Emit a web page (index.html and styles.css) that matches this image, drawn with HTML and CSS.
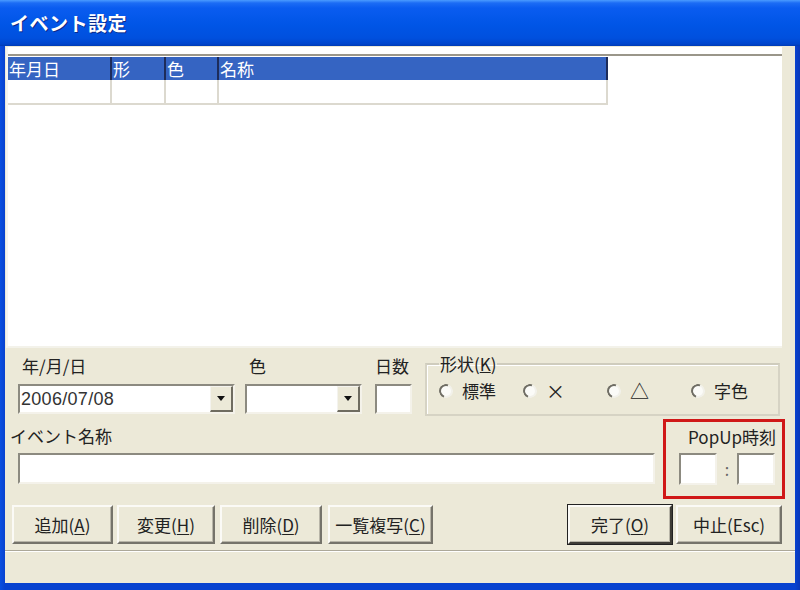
FILE: index.html
```html
<!DOCTYPE html>
<html lang="ja">
<head>
<meta charset="utf-8">
<title>イベント設定</title>
<link rel="stylesheet" href="styles.css">
</head>
<body>
<div class="window">
  <div class="titlebar">イベント設定</div>
  <div class="client">
    <div class="list">
      <div class="list-inner">
        <div class="hrow">
          <div class="hcell c1">年月日</div>
          <div class="hcell c2">形</div>
          <div class="hcell c3">色</div>
          <div class="hcell c4">名称</div>
        </div>
        <div class="drow">
          <div class="dcell c1"></div>
          <div class="dcell c2"></div>
          <div class="dcell c3"></div>
          <div class="dcell c4"></div>
        </div>
      </div>
    </div>

    <div class="row1">
      <div class="field fa">
        <div class="lbl">年/月/日</div>
        <div class="combo">
          <span class="val">2006/07/08</span>
          <span class="ddbtn"><span class="tri"></span></span>
        </div>
      </div>
      <div class="field fb">
        <div class="lbl">色</div>
        <div class="combo">
          <span class="val"></span>
          <span class="ddbtn"><span class="tri"></span></span>
        </div>
      </div>
      <div class="field fc">
        <div class="lbl">日数</div>
        <div class="box days"></div>
      </div>
      <fieldset class="group">
        <legend>形状(<u>K</u>)</legend>
        <div class="radios">
          <div class="ritem"><span class="radio"></span><span>標準</span></div>
          <div class="ritem"><span class="radio"></span><span class="sym">×</span></div>
          <div class="ritem"><span class="radio"></span><span class="sym">△</span></div>
          <div class="ritem"><span class="radio"></span><span>字色</span></div>
        </div>
      </fieldset>
    </div>

    <div class="row2">
      <div class="namecol">
        <div class="lbl namelbl">イベント名称</div>
        <div class="box nameinput"></div>
      </div>
      <div class="popup">
        <div class="poplbl">PopUp時刻</div>
        <div class="poprow">
          <div class="box small"></div>
          <span class="colon">:</span>
          <div class="box small"></div>
        </div>
      </div>
    </div>

    <div class="row3">
      <div class="btn b1">追加(<u>A</u>)</div>
      <div class="btn b2">変更(<u>H</u>)</div>
      <div class="btn b3">削除(<u>D</u>)</div>
      <div class="btn b4">一覧複写(<u>C</u>)</div>
      <div class="spacer"></div>
      <div class="btn default b5">完了(<u>O</u>)</div>
      <div class="btn b6">中止(Esc)</div>
    </div>

    <div class="status"></div>
  </div>
</div>
</body>
</html>
```
FILE: styles.css
```css
* { box-sizing: border-box; }
html, body { margin: 0; padding: 0; }
body {
  font-family: "Noto Sans CJK JP", "Liberation Sans", sans-serif;
  color: #222;
  background: #0842d0;
}
.window {
  width: 800px;
  height: 590px;
  background: linear-gradient(90deg, #0a4fe0 0, #0842d0 5px, #0842d0 795px, #0a38b8 800px);
  display: flex;
  flex-direction: column;
  overflow: hidden;
}
.titlebar {
  height: 46px;
  flex: none;
  background: linear-gradient(#4a9bff 0, #1c6cf5 3px, #0a5cf0 8px, #0055e6 25px, #0050de 38px, #0045cc 44px, #003bb4 46px);
  color: #fff;
  font-weight: bold;
  font-size: 19px;
  display: flex;
  align-items: center;
  padding-left: 10px;
  padding-bottom: 1px;
  letter-spacing: 0.5px;
  text-shadow: 1px 1px 0 #0b2a8a;
}
.client {
  flex: 1;
  margin: 0 5px 7px 5px;
  background: #ece9d8;
  display: flex;
  flex-direction: column;
}
/* list */
.list {
  flex: none;
  height: 301px;
  margin: 1px 13px 0 1px;
  background: #fff;
  border-left: 2px solid #f6f5f0;
  border-bottom: 2px solid #f3f2ea;
  padding: 7px 0 0 0;
}
.list-inner {
  border-top: 2px solid #9a968a;
  padding-top: 1px;
}
.hrow, .drow { display: flex; width: 600px; }
.hrow { height: 23px; background: #3564c2; }
.hcell {
  color: #fff;
  font-size: 17px;
  line-height: 23px;
  padding-left: 1px;
  border-right: 2px solid #1d2c5a;
  white-space: nowrap;
}
.c1 { width: 104px; }
.c2 { width: 54px; }
.c3 { width: 53px; }
.c4 { width: 389px; }
.drow { height: 25px; border-bottom: 2px solid #dcd9cf; }
.dcell { border-right: 2px solid #dcd9cf; }
/* row1 */
.row1 {
  display: flex;
  align-items: flex-start;
  margin-top: 7px;
  padding-left: 13px;
}
.field { display: flex; flex-direction: column; }
.fa { width: 217px; }
.fb { width: 117px; margin-left: 10px; }
.fc { width: 37px; margin-left: 13px; }
.lbl {
  font-size: 17px;
  line-height: 22px;
  height: 29px;
  padding-left: 4px;
  white-space: nowrap;
}
.fc .lbl { padding-left: 0; }
.combo, .box {
  height: 30px;
  background: #fff;
  border-top: 2px solid #8c8a80;
  border-left: 2px solid #8c8a80;
  border-right: 2px solid #f4f2ea;
  border-bottom: 2px solid #f4f2ea;
}
.combo {
  display: flex;
  align-items: center;
}
.val {
  flex: 1;
  font-family: "Liberation Sans", sans-serif;
  font-size: 18px;
  letter-spacing: 0.3px;
  color: #333;
  padding-left: 1px;
}
.ddbtn {
  flex: none;
  width: 23px;
  height: 26px;
  background: #ece9d8;
  border-top: 1px solid #f4f3ee;
  border-left: 1px solid #f4f3ee;
  border-right: 2px solid #6f6c60;
  border-bottom: 2px solid #6f6c60;
  display: flex;
  align-items: center;
  justify-content: center;
}
.tri {
  width: 0; height: 0;
  border-left: 4px solid transparent;
  border-right: 4px solid transparent;
  border-top: 5px solid #111;
}
.group {
  width: 355px;
  margin: -2px 0 0 13px;
  padding: 4px 0 0 12px;
  height: 63px;
  border: 2px solid #d6d3c4;
  border-top-color: #cfccbd;
  box-shadow: inset 1px 1px 0 #fff;
}
.group legend {
  font-size: 17px;
  line-height: 22px;
  padding: 0 1px;
  margin-left: 0;
}
.radios { display: flex; }
.ritem {
  width: 84px;
  display: flex;
  align-items: center;
  font-size: 17px;
  line-height: 24px;
}
.radio {
  flex: none;
  width: 14px; height: 14px;
  border-radius: 50%;
  border: 2px solid #f2f1ea;
  border-top-color: #6f6d64;
  border-left-color: #6f6d64;
  background: #fbfbf8;
  margin-right: 9px;
  transform: rotate(-25deg);
}
.sym { font-family: "Noto Sans CJK JP", sans-serif; font-size: 19px; line-height: 24px; }
/* row2 */
.row2 {
  display: flex;
  margin-top: 3px;
}
.namecol { width: 650px; display: flex; flex-direction: column; }
.namelbl { padding-left: 5px; padding-top: 6px; height: 34px; }
.nameinput { margin-left: 13px; width: 637px; height: 31px; }
.popup {
  width: 122px;
  height: 80px;
  margin-left: 8px;
  border: 3px solid #d01818;
  padding: 4px 6px 0 13px;
}
.poplbl {
  font-size: 17px;
  line-height: 22px;
  text-align: right;
  height: 27px;
  white-space: nowrap;
}
.poprow { display: flex; align-items: center; }
.small { width: 38px; height: 32px; }
.colon { width: 20px; text-align: center; font-size: 16px; color: #666; }
/* row3 */
.row3 {
  display: flex;
  margin-top: 6px;
  padding-left: 7px;
  padding-right: 13px;
}
.btn {
  height: 39px;
  font-size: 17px;
  display: flex;
  align-items: center;
  justify-content: center;
  background: #ece9d8;
  border-top: 2px solid #fbfaf6;
  border-left: 2px solid #fbfaf6;
  border-right: 2px solid #75736a;
  border-bottom: 2px solid #75736a;
  box-shadow: inset -1px -1px 0 #b8b5a8;
  white-space: nowrap;
}
.b1 { width: 101px; }
.b2 { width: 98px; margin-left: 4px; }
.b3 { width: 102px; margin-left: 5px; }
.b4 { width: 105px; margin-left: 6px; }
.spacer { flex: 1; }
.b5 { width: 104px; }
.b6 { width: 106px; margin-left: 4px; }
.default {
  outline: 1px solid #222;
  border-right-color: #3e3c36;
  border-bottom-color: #3e3c36;
}
.btn u { text-decoration-thickness: 1px; text-underline-offset: 2px; }
.status {
  margin-top: 6px;
  border-top: 1px solid #aca899;
  box-shadow: inset 0 1px 0 #fff;
  flex: 1;
}
```
